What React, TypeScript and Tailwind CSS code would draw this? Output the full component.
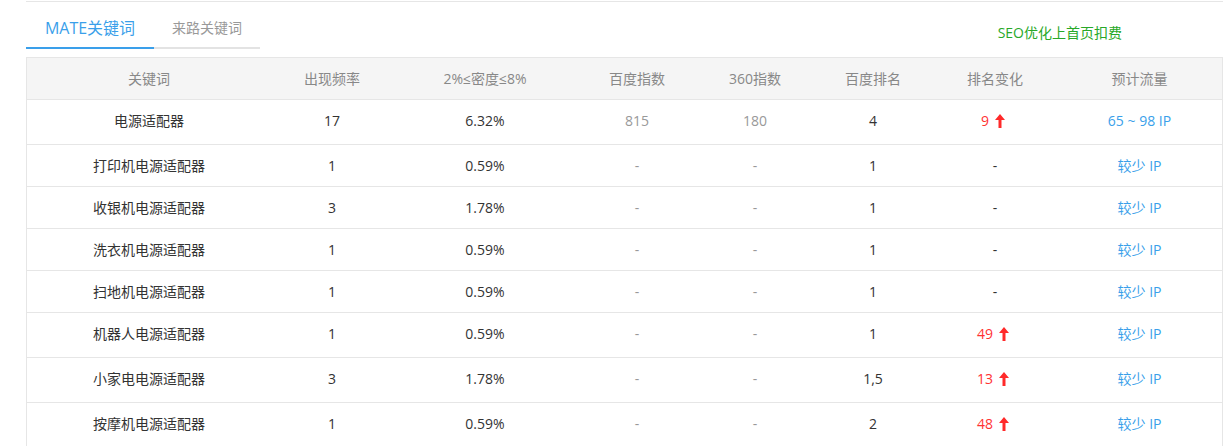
import React from "react";

type Row = {
  kw: string;
  freq: string;
  dens: string;
  bd: string;
  s360: string;
  rank: string;
  change: string | null;
  flow: string;
  tall: boolean;
};

const rows: Row[] = [
  { kw: "电源适配器", freq: "17", dens: "6.32%", bd: "815", s360: "180", rank: "4", change: "9", flow: "65 ~ 98 IP", tall: true },
  { kw: "打印机电源适配器", freq: "1", dens: "0.59%", bd: "-", s360: "-", rank: "1", change: null, flow: "较少 IP", tall: false },
  { kw: "收银机电源适配器", freq: "3", dens: "1.78%", bd: "-", s360: "-", rank: "1", change: null, flow: "较少 IP", tall: false },
  { kw: "洗衣机电源适配器", freq: "1", dens: "0.59%", bd: "-", s360: "-", rank: "1", change: null, flow: "较少 IP", tall: false },
  { kw: "扫地机电源适配器", freq: "1", dens: "0.59%", bd: "-", s360: "-", rank: "1", change: null, flow: "较少 IP", tall: false },
  { kw: "机器人电源适配器", freq: "1", dens: "0.59%", bd: "-", s360: "-", rank: "1", change: "49", flow: "较少 IP", tall: true },
  { kw: "小家电电源适配器", freq: "3", dens: "1.78%", bd: "-", s360: "-", rank: "1,5", change: "13", flow: "较少 IP", tall: true },
  { kw: "按摩机电源适配器", freq: "1", dens: "0.59%", bd: "-", s360: "-", rank: "2", change: "48", flow: "较少 IP", tall: true },
];

const headers = ["关键词", "出现频率", "2%≤密度≤8%", "百度指数", "360指数", "百度排名", "排名变化", "预计流量"];

const gridCols = "grid grid-cols-[244px_122px_184px_120px_116px_120px_124px_165px]";

function UpArrow() {
  return (
    <svg width="10" height="14" viewBox="0 0 10 14" className="ml-[6px] inline-block">
      <polygon points="5,0 10,6 6.5,6 6.5,14 3.5,14 3.5,6 0,6" fill="#ff2a2a" />
    </svg>
  );
}

export default function App() {
  return (
    <div
      className="bg-white w-[1224px] h-[446px] overflow-hidden pl-[26px]"
      style={{ fontFamily: '"Open Sans", "Noto Sans CJK SC", sans-serif' }}
    >
      <div className="w-[1197px]">
        <div className="mt-px h-px bg-[#e6e6e6]" />
        <div className="flex h-[47px] justify-between">
          <div className="flex items-stretch h-full">
            <div className="w-[128px] flex items-center justify-center pt-[6px] text-[16px] text-[#3a9fea] border-b-2 border-[#3a9fea]">
              MATE关键词
            </div>
            <div className="w-[106px] flex items-center justify-center pt-[5px] text-[14px] text-[#999999] border-b-2 border-[#e3e3e3]">
              来路关键词
            </div>
          </div>
          <div className="mt-[21px] mr-[101px] leading-[20px] text-[14px] text-[#28a828]">
            SEO优化上首页扣费
          </div>
        </div>
        <div className="mt-[8px] border-t border-l border-r border-[#e6e6e6]">
          <div className={`${gridCols} h-[42px] pb-[1px] bg-[#f5f5f5] border-b border-[#e6e6e6]`}>
            {headers.map((h) => (
              <div key={h} className="flex items-center justify-center text-[14px] text-[#888888]">
                {h}
              </div>
            ))}
          </div>
          {rows.map((r) => (
            <div
              key={r.kw}
              className={`${gridCols} ${r.tall ? "h-[45px] pb-[3px]" : "h-[42px] pb-[1px]"} border-b border-[#e6e6e6] text-[14px]`}
            >
              <div className="flex items-center justify-center text-[#333333]">{r.kw}</div>
              <div className="flex items-center justify-center text-[#333333]">{r.freq}</div>
              <div className="flex items-center justify-center text-[#333333]">{r.dens}</div>
              <div className="flex items-center justify-center text-[#999999]">{r.bd}</div>
              <div className="flex items-center justify-center text-[#999999]">{r.s360}</div>
              <div className="flex items-center justify-center text-[#333333]">{r.rank}</div>
              <div className="flex items-center justify-center pr-[4px]">
                {r.change ? (
                  <span className="flex items-center text-[#ff3333]">
                    {r.change}
                    <UpArrow />
                  </span>
                ) : (
                  <span className="text-[#333333] pl-[4px]">-</span>
                )}
              </div>
              <div className="flex items-center justify-center text-[#3a9fea]">{r.flow}</div>
            </div>
          ))}
        </div>
      </div>
    </div>
  );
}
